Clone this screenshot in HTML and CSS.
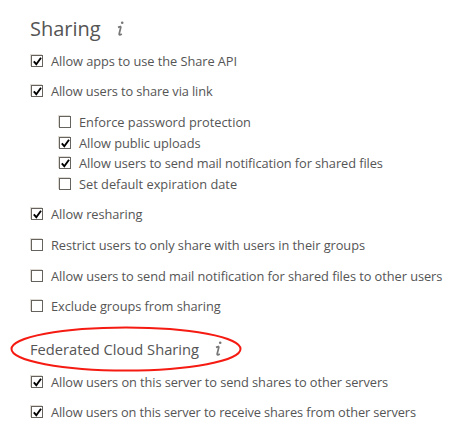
FILE: index.html
```
<!DOCTYPE html>
<html lang="en">
<head>
<meta charset="utf-8">
<title>Sharing</title>
<link rel="stylesheet" href="styles.css">
</head>
<body>
<svg class="defs" aria-hidden="true">
  <symbol id="info" viewBox="0 0 16 16">
    <circle cx="10.2" cy="1.7" r="1.3" fill="#777"/>
    <path d="M6 6.4L9 5.4M9 5.4L7.2 12.8Q7 14.8 9.8 13" fill="none" stroke="#777" stroke-width="1.75"/>
  </symbol>
  <symbol id="tick" viewBox="0 0 9 9">
    <path d="M.8 4.4L3.3 7.2L8 .8" fill="none" stroke="#000" stroke-width="1.9"/>
  </symbol>
</svg>
<main>
  <h2>Sharing<svg class="info"><use href="#info"/></svg></h2>
  <div class="row"><span class="box"><svg><use href="#tick"/></svg></span>Allow apps to use the Share API</div>
  <div class="row tight"><span class="box"><svg><use href="#tick"/></svg></span>Allow users to share via link</div>
  <div class="nested">
    <div class="row loose"><span class="box"></span>Enforce password protection</div>
    <div class="row"><span class="box"><svg><use href="#tick"/></svg></span>Allow public uploads</div>
    <div class="row snug"><span class="box"><svg><use href="#tick"/></svg></span>Allow users to send mail notification for shared files</div>
    <div class="row loose"><span class="box"></span>Set default expiration date</div>
  </div>
  <div class="row"><span class="box"><svg><use href="#tick"/></svg></span>Allow resharing</div>
  <div class="row"><span class="box"></span>Restrict users to only share with users in their groups</div>
  <div class="row"><span class="box"></span>Allow users to send mail notification for shared files to other users</div>
  <div class="row"><span class="box"></span>Exclude groups from sharing</div>
  <h3>Federated Cloud Sharing<svg class="info"><use href="#info"/></svg>
    <svg class="ring" viewBox="0 0 232 46"><ellipse cx="116" cy="23" rx="114.5" ry="21.5"/></svg>
  </h3>
  <div class="row snug"><span class="box"><svg><use href="#tick"/></svg></span>Allow users on this server to send shares to other servers</div>
  <div class="row tight"><span class="box"><svg><use href="#tick"/></svg></span>Allow users on this server to receive shares from other servers</div>
</main>
</body>
</html>
```
FILE: styles.css
```
body {
  margin: 0;
  background: #fff;
  color: #555;
  font: 12.8px/20px "Open Sans", sans-serif;
}
.defs {
  position: absolute;
  width: 0;
  height: 0;
}
main {
  display: grid;
  grid-template-rows: 33px 30px 30px 93px 31px 31px 30px 30px 46px 30px 30px;
  padding: 13px 0 0 30px;
}
h2, h3 {
  display: flex;
  align-items: center;
  margin: 0;
  font-weight: 400;
}
h2 {
  padding-bottom: 2px;
  font-size: 20px;
}
h3 {
  position: relative;
  padding-top: 10px;
  font-size: 14.7px;
}
.info {
  width: 16px;
  height: 16px;
  margin-left: 11px;
}
.row {
  display: flex;
  align-items: center;
  height: 30px;
  letter-spacing: -0.055px;
  white-space: nowrap;
}
.snug {
  letter-spacing: -0.075px;
}
.tight {
  letter-spacing: -0.11px;
}
.loose {
  letter-spacing: 0;
}
.nested {
  display: grid;
  grid-template-rows: 21px 20px 21px 20px;
  padding: 6px 0 5px 28px;
}
.nested .row {
  height: 20px;
}
.box {
  display: flex;
  align-items: center;
  justify-content: center;
  box-sizing: border-box;
  width: 12px;
  height: 12px;
  margin: 0 8px 0 1px;
  border: 1px solid #66635e;
  box-shadow: -1px -1px #dedbd5;
}
.box svg {
  width: 9px;
  height: 9px;
}
.ring {
  position: absolute;
  left: -20px;
  top: 5px;
  width: 232px;
  height: 46px;
}
.ring ellipse {
  fill: none;
  stroke: #f51b12;
  stroke-width: 2;
}
```
